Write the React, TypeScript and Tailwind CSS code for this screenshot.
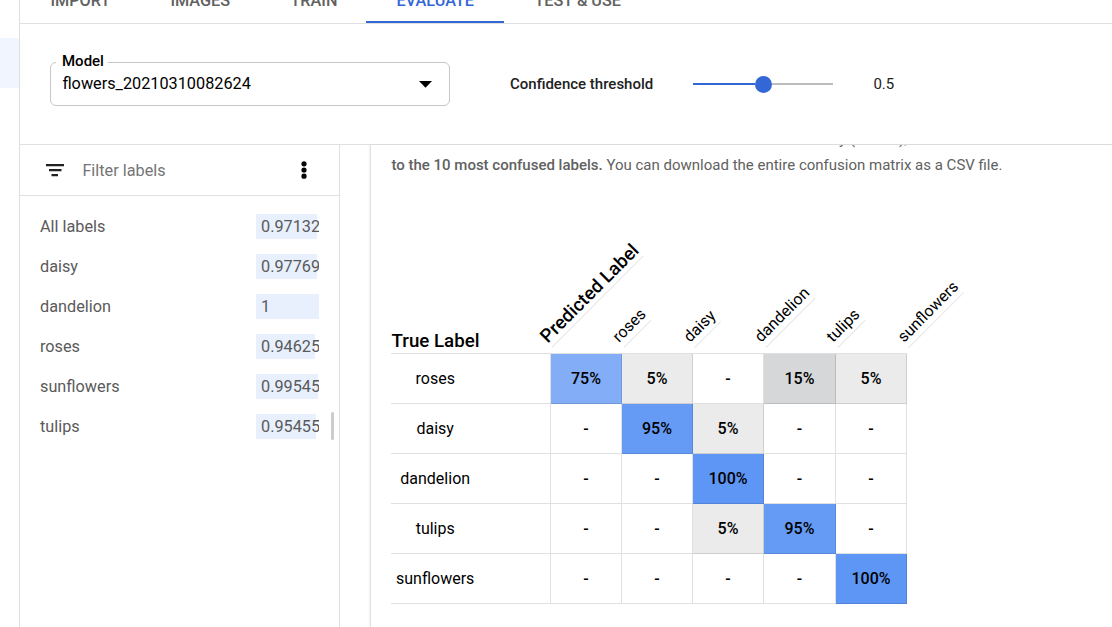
import React from "react";

const tabs = [
  { name: "IMPORT", width: "w-[120px]" },
  { name: "IMAGES", width: "w-[120px]" },
  { name: "TRAIN", width: "w-[106px]" },
  { name: "EVALUATE", width: "w-[138px]", active: true },
  { name: "TEST & USE", width: "w-[148px]" },
];

const labels = [
  { name: "All labels", value: "0.97132", bar: "w-[61px]" },
  { name: "daisy", value: "0.97769", bar: "w-[61px]" },
  { name: "dandelion", value: "1", bar: "w-[63px]" },
  { name: "roses", value: "0.94625", bar: "w-[59px]" },
  { name: "sunflowers", value: "0.99545", bar: "w-[62px]" },
  { name: "tulips", value: "0.95455", bar: "w-[60px]" },
];

const classes = ["roses", "daisy", "dandelion", "tulips", "sunflowers"];

const matrix = [
  ["75%", "5%", "-", "15%", "5%"],
  ["-", "95%", "5%", "-", "-"],
  ["-", "-", "100%", "-", "-"],
  ["-", "-", "5%", "95%", "-"],
  ["-", "-", "-", "-", "100%"],
];

const fills: Record<string, string> = {
  "-": "",
  "5%": "bg-[#ebebeb]",
  "15%": "bg-[#d5d7d9]",
  "75%": "bg-[#83aef7]",
  "95%": "bg-[#659bf5]",
  "100%": "bg-[#5e96f5]",
};

const columns = "grid grid-cols-[160px_71px_71px_71px_72px_71px_71px]";

function Tabs() {
  return (
    <nav className="flex h-6 shrink-0 items-end border-b border-[#e0e0e0]">
      {tabs.map((t) => (
        <div
          key={t.name}
          className={`flex h-[45px] shrink-0 items-center whitespace-nowrap border-b-2 pt-0.5 pl-[30.4px] text-[16.25px] leading-5 font-medium ${t.width} ${
            t.active ? "border-[#3367d6] text-[#3367d6]" : "border-transparent text-[#616161]"
          }`}
        >
          {t.name}
        </div>
      ))}
    </nav>
  );
}

function Controls() {
  return (
    <div className="flex h-[121px] shrink-0 items-start border-b border-[#e0e0e0] pl-[30px] pt-[38px]">
      <div className="relative flex h-11 w-[400px] items-center justify-between rounded-md border border-[#c6c6c6] pl-[11.4px] pr-[17px] text-[16.25px] text-black">
        <span className="absolute -top-3 left-[5px] bg-white pl-1.5 pr-1 text-[15px] leading-5 font-medium">Model</span>
        <span>flowers_20210310082624</span>
        <svg width="13" height="7" viewBox="0 0 13 7">
          <path d="M0 0h13L6.5 6.8z" fill="#000" />
        </svg>
      </div>
      <div className="ml-[60px] flex h-11 items-center text-[15px] text-[#212121]">
        <span className="w-[183px] font-medium">Confidence threshold</span>
        <div className="flex w-[140px] items-center">
          <div className="h-0.5 w-[62px] bg-[#3367d6]" />
          <div className="size-[17px] rounded-full bg-[#3367d6]" />
          <div className="h-0.5 flex-1 bg-[#bdbdbd]" />
        </div>
        <span className="ml-[40.400px]">0.5</span>
      </div>
    </div>
  );
}

function LabelList() {
  return (
    <aside className="flex w-80 shrink-0 flex-col border-r border-[#e0e0e0]">
      <div className="flex h-[51px] shrink-0 items-center border-b border-[#e0e0e0] pl-[26px] text-[16.25px] text-[#757575]">
        <svg width="18" height="13" viewBox="0 0 18 13" fill="#212121">
          <path d="M0 0h18v2.3H0zM3 5h12.5v2.3H3zM5.5 10H12v2.3H5.500z" />
        </svg>
        <span className="ml-[18.4px] flex-1 pt-0.5">Filter labels</span>
        <svg className="mr-8" width="6" height="18" viewBox="0 0 6 18" fill="#000">
          <circle cx="3" cy="2.800" r="2.6" />
          <circle cx="3" cy="9" r="2.6" />
          <circle cx="3" cy="15.200" r="2.6" />
        </svg>
      </div>
      <div className="flex pt-[10px]">
        <ul className="w-[311px]">
          {labels.map((l) => (
            <li key={l.name} className="flex h-10 items-center pl-5 text-[16.25px] text-[#5a5a5a]">
              <span className="w-[216px] leading-[25px]">{l.name}</span>
              <div className="w-[63px] overflow-hidden">
                <div className={`h-[25px] bg-[#e8f0fe] pl-[5px] leading-[25px] ${l.bar}`}>{l.value}</div>
              </div>
            </li>
          ))}
        </ul>
        <div className="mb-[6px] h-7 w-[3px] self-end rounded-full bg-[#cccccc]" />
      </div>
    </aside>
  );
}

function Matrix() {
  return (
    <div className="mt-[27px] w-[600px] text-base text-black">
      <div className={`${columns} h-[149px] items-end`}>
        <div className="pl-[0.6px] text-[18.7px] leading-6 font-medium">True Label</div>
        {["Predicted Label", ...classes].map((c, i) => (
          <div key={c} className={i === 0 ? "pb-[5px] pl-[0.5px] text-[18.7px] font-medium" : "pb-[5px] pl-0.5"}>
            <div className="h-6 w-max origin-bottom-left -rotate-45 whitespace-nowrap border-b border-black/10 leading-6">
              {c}
            </div>
          </div>
        ))}
      </div>
      <div className="w-[516px] border-t border-black/12">
        {matrix.map((row, r) => (
          <div key={classes[r]} className={`${columns} h-[50px]`}>
            <div className="flex items-center border-r border-b border-black/12">
              <span className="w-[88.400px] text-center">{classes[r]}</span>
            </div>
            {row.map((v, c) => (
              <div
                key={c}
                className={`flex items-center justify-center border-r border-b border-black/12 font-medium ${fills[v]}`}
              >
                {v}
              </div>
            ))}
          </div>
        ))}
      </div>
    </div>
  );
}

export default function App() {
  return (
    <div className="flex h-[627px] w-[1112px] overflow-hidden bg-white font-[Roboto,sans-serif]">
      <div className="w-5 shrink-0 border-r border-[#e0e0e0] pt-[38px]">
        <div className="h-[50px] bg-[#f0f5ff]" />
      </div>
      <div className="flex min-w-0 flex-1 flex-col">
        <Tabs />
        <Controls />
        <div className="flex min-h-0 flex-1">
          <LabelList />
          <main className="ml-[30px] flex flex-1 flex-col justify-start overflow-hidden border-l border-[#e0e0e0] pl-5 shadow-[-1px_0_2px_rgba(0,0,0,0.06)]">
            <div className="-mt-[18px] shrink-0 whitespace-nowrap pl-[0.4px] text-[15px] leading-6 text-[#616161]">
              <p className="mb-[2px] pl-px">
                This table shows how often the model classified each label correctly (in blue), and which labels were
                most
              </p>
              <p>
                <b className="font-medium">to the 10 most confused labels.</b> You can download the entire confusion
                matrix as a CSV file.
              </p>
            </div>
            <Matrix />
          </main>
        </div>
      </div>
    </div>
  );
}
